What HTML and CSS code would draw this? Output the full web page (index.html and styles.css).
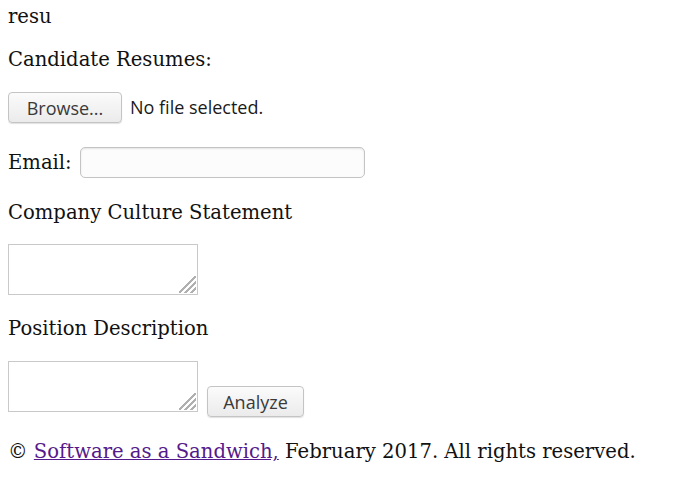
FILE: index.html
```html
<!DOCTYPE html>
<html>
  <head>
    <title>resu</title>
    <link rel="stylesheet" href="styles.css">
  </head>
  <body>

    <div class="brand">resu</div>

    <form class="resume-form">
      <p class="label label-resumes">Candidate Resumes:</p>

      <div class="file-row">
        <button type="button" class="btn btn-browse">Browse...</button>
        <span class="file-name">No file selected.</span>
      </div>

      <div class="email-row">
        <label class="label" for="email">Email:</label>
        <input type="email" id="email" class="text-input">
      </div>

      <p class="label label-culture">Company Culture Statement</p>
      <div class="area-row area-culture"><textarea class="area"></textarea></div>

      <p class="label label-position">Position Description</p>
      <div class="area-row area-position">
        <textarea class="area"></textarea>
        <button type="submit" class="btn btn-analyze">Analyze</button>
      </div>
    </form>

    <footer class="footer">
      &copy; <a href="#">Software as a Sandwich,</a> February 2017. All rights reserved.
    </footer>

  </body>
</html>
```

FILE: styles.css
```css
body {
  margin: 5px 8px 8px;
  font-family: "DejaVu Serif", serif;
  font-size: 19.6px;
  line-height: 23px;
  color: #111;
  background-color: #fff;
}

p {
  margin: 0;
}

.label-resumes { margin-top: 20px; }
.label-culture { margin-top: 23px; }
.label-position { margin-top: 22px; }

/* Form controls */

.btn {
  font-family: "Open Sans", "DejaVu Sans", sans-serif;
  font-size: 18px;
  color: #3a3a3a;
  background: linear-gradient(#fbfbfb, #ebebeb);
  border: 1px solid #c4c4c4;
  border-radius: 4px;
  box-shadow: 0 1px 1px rgba(0, 0, 0, 0.12);
  height: 31px;
  padding: 0;
  margin: 0;
}

.btn-browse {
  width: 114px;
}

.file-row {
  display: flex;
  align-items: center;
  gap: 8px;
  margin-top: 21px;
}

.file-name {
  font-family: "Open Sans", "DejaVu Sans", sans-serif;
  font-size: 18px;
  color: #1a1a1a;
}

.email-row {
  display: flex;
  align-items: center;
  gap: 8px;
  margin-top: 24px;
}

.text-input {
  width: 285px;
  height: 31px;
  box-sizing: border-box;
  border: 1px solid #c4c4c4;
  border-radius: 5px;
  box-shadow: inset 0 1px 2px rgba(0, 0, 0, 0.1);
  background-color: #fcfcfc;
  margin: 0;
}

.area-row {
  display: flex;
  align-items: flex-start;
  gap: 9px;
}

.area-culture { margin-top: 20px; }
.area-position { margin-top: 21px; }

.area {
  width: 190px;
  height: 51px;
  box-sizing: border-box;
  border: 1px solid #c9c9c9;
  resize: none;
  margin: 0;
  background:
    linear-gradient(135deg, transparent 45%, #b0b0b0 45%, #b0b0b0 55%, transparent 55%, transparent 63%, #b0b0b0 63%, #b0b0b0 73%, transparent 73%, transparent 81%, #b0b0b0 81%, #b0b0b0 91%, transparent 91%)
    right 1px bottom 1px / 17px 17px no-repeat,
    #fff;
}

.btn-analyze {
  width: 97px;
  margin-top: 25px;
}

/* Footer */

.footer {
  margin-top: 23px;
}

.footer a {
  color: #551a8b;
}
```
